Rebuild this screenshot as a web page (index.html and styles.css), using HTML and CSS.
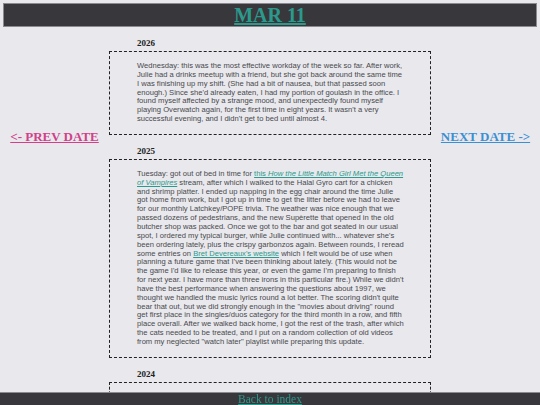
FILE: index.html
```html
<!DOCTYPE html>
<html lang="en">
<head>
<meta charset="utf-8">
<title>Mar 11</title>
<link rel="stylesheet" href="styles.css">
</head>
<body>
<header class="topbar">
  <h1 class="title"><a href="#">MAR 11</a></h1>
</header>

<div class="layout">
  <nav class="side">
    <a class="nav-link prev" href="#">&lt;- PREV DATE</a>
  </nav>

  <main class="entries">
    <section class="entry">
      <h3 class="year">2026</h3>
      <div class="entry-box">
        <p>Wednesday: this was the most effective workday of the week so far. After work, Julie had a drinks meetup with a friend, but she got back around the same time I was finishing up my shift. (She had a bit of nausea, but that passed soon enough.) Since she'd already eaten, I had my portion of goulash in the office. I found myself affected by a strange mood, and unexpectedly found myself playing Overwatch again, for the first time in eight years. It wasn't a very successful evening, and I didn't get to bed until almost 4.</p>
      </div>
    </section>

    <section class="entry">
      <h3 class="year">2025</h3>
      <div class="entry-box">
        <p>Tuesday: got out of bed in time for <a href="#">this <em>How the Little Match Girl Met the Queen of Vampires</em></a> stream, after which I walked to the Halal Gyro cart for a chicken and shrimp platter. I ended up napping in the egg chair around the time Julie got home from work, but I got up in time to get the litter before we had to leave for our monthly Latchkey/POPE trivia. The weather was nice enough that we passed dozens of pedestrians, and the new Supèrette that opened in the old butcher shop was packed. Once we got to the bar and got seated in our usual spot, I ordered my typical burger, while Julie continued with... whatever she's been ordering lately, plus the crispy garbonzos again. Between rounds, I reread some entries on <a href="#">Bret Devereaux's website</a> which I felt would be of use when planning a future game that I've been thinking about lately. (This would not be the game I'd like to release this year, or even the game I'm preparing to finish for next year. I have more than three irons in this particular fire.) While we didn't have the best performance when answering the questions about 1997, we thought we handled the music lyrics round a lot better. The scoring didn't quite bear that out, but we did strongly enough in the "movies about driving" round get first place in the singles/duos category for the third month in a row, and fifth place overall. After we walked back home, I got the rest of the trash, after which the cats needed to be treated, and I put on a random collection of old videos from my neglected "watch later" playlist while preparing this update.</p>
      </div>
    </section>

    <section class="entry">
      <h3 class="year">2024</h3>
      <div class="entry-box">
        <p>Monday: a quiet day at home.</p>
      </div>
    </section>
  </main>

  <nav class="side">
    <a class="nav-link next" href="#">NEXT DATE -&gt;</a>
  </nav>
</div>

<footer class="bottombar">
  <a href="#">Back to index</a>
</footer>
</body>
</html>
```

FILE: styles.css
```css
html, body {
  margin: 0;
  padding: 0;
}

body {
  background: #e8e8ed;
  font-family: "Liberation Serif", "Times New Roman", serif;
  color: #222;
}

a {
  color: #2b9a8c;
}

/* title bar */
.topbar {
  margin: 3px 3px 0;
  background: #38383c;
  border: 1px solid #8a8a90;
  height: 22px;
  display: flex;
  align-items: center;
  justify-content: center;
}

.title {
  margin: 0;
  font-size: 20px;
  line-height: 22px;
  font-weight: bold;
}

.title a {
  color: #2b9a8c;
}

/* three columns: prev link, entries, next link */
.layout {
  display: flex;
  align-items: flex-start;
  padding-bottom: 40px;
}

.side {
  flex: 1;
  display: flex;
  justify-content: center;
  padding-top: 102px;
}

.nav-link {
  font-size: 13px;
  font-weight: bold;
  line-height: 16px;
}

.nav-link.prev {
  color: #d2408a;
}

.nav-link.next {
  color: #3b8fd3;
}

.entries {
  width: 322px;
  flex: none;
}

.year {
  margin: 11px 0 3px;
  padding-left: 28px;
  font-size: 9px;
  line-height: 10px;
  font-weight: bold;
  color: #222;
}

.entry-box {
  border: 1px dashed #222;
  padding: 10px 26px 10px 27px;
}

.entry-box p {
  margin: 0;
  font-family: "Liberation Sans", Arial, sans-serif;
  font-size: 7.6px;
  line-height: 8.85px;
  color: #48484c;
}

.entry-box p a {
  color: #2b9a8c;
}

/* index link pinned to the bottom edge */
.bottombar {
  position: fixed;
  left: 0;
  right: 0;
  bottom: 0;
  height: 12px;
  background: #38383c;
  border-top: 1px solid #8a8a90;
  text-align: center;
  font-size: 11.5px;
  line-height: 12px;
}

.bottombar a {
  color: #2b9a8c;
}
```
